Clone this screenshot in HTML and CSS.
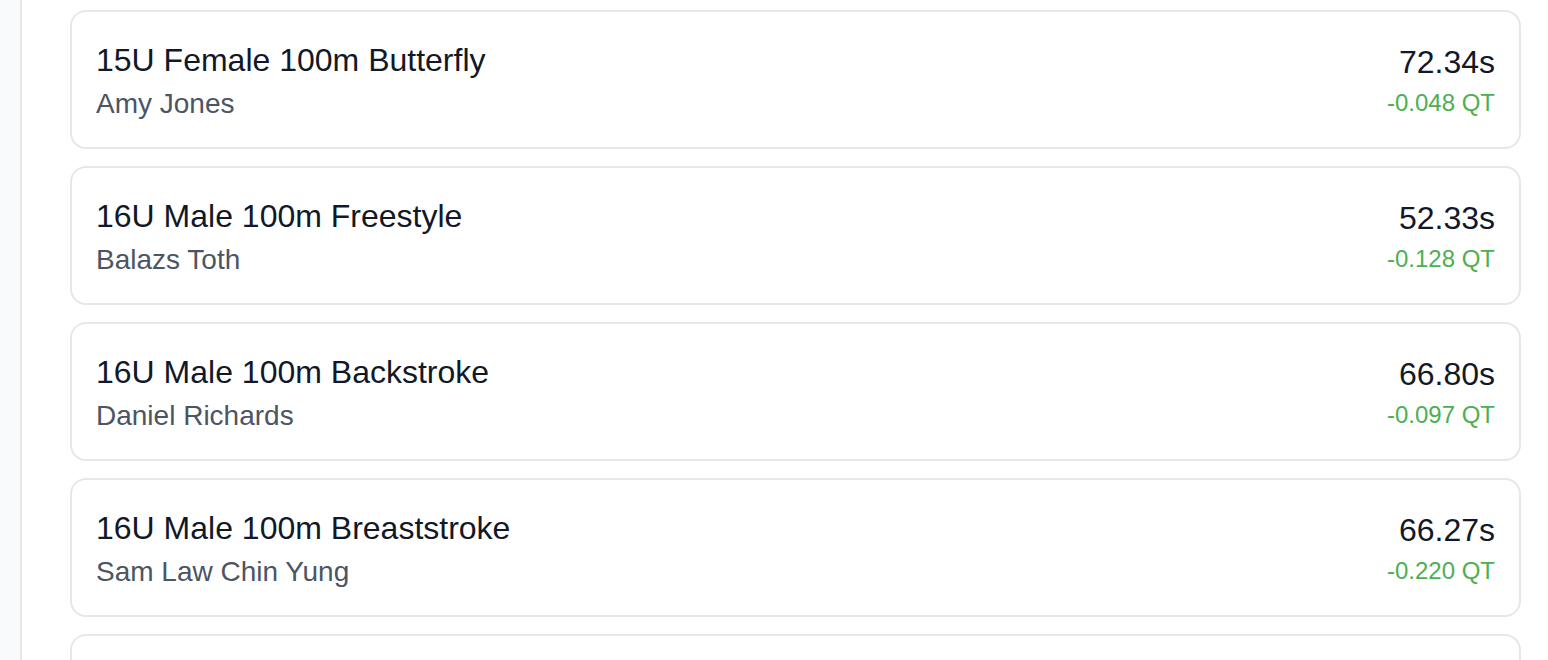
FILE: index.html
```html
<!DOCTYPE html>
<html lang="en">
<head>
<meta charset="utf-8">
<title>Qualifying Times</title>
<link rel="stylesheet" href="styles.css">
</head>
<body>
<div class="layout">
  <aside class="sidebar"></aside>
  <main class="main">
    <ul class="results">
      <li class="card">
        <div class="info">
          <div class="event">15U Female 100m Butterfly</div>
          <div class="swimmer">Amy Jones</div>
        </div>
        <div class="stats">
          <div class="time">72.34s</div>
          <div class="diff">-0.048 QT</div>
        </div>
      </li>
      <li class="card">
        <div class="info">
          <div class="event">16U Male 100m Freestyle</div>
          <div class="swimmer">Balazs Toth</div>
        </div>
        <div class="stats">
          <div class="time">52.33s</div>
          <div class="diff">-0.128 QT</div>
        </div>
      </li>
      <li class="card">
        <div class="info">
          <div class="event">16U Male 100m Backstroke</div>
          <div class="swimmer">Daniel Richards</div>
        </div>
        <div class="stats">
          <div class="time">66.80s</div>
          <div class="diff">-0.097 QT</div>
        </div>
      </li>
      <li class="card">
        <div class="info">
          <div class="event">16U Male 100m Breaststroke</div>
          <div class="swimmer">Sam Law Chin Yung</div>
        </div>
        <div class="stats">
          <div class="time">66.27s</div>
          <div class="diff">-0.220 QT</div>
        </div>
      </li>
      <li class="card">
        <div class="info">
          <div class="event">16U Male 200m Individual Medley</div>
          <div class="swimmer">Daniel Richards</div>
        </div>
        <div class="stats">
          <div class="time">142.10s</div>
          <div class="diff">-0.015 QT</div>
        </div>
      </li>
    </ul>
  </main>
</div>
</body>
</html>
```

FILE: styles.css
```css
* {
  box-sizing: border-box;
}

html, body {
  margin: 0;
  padding: 0;
  background: #ffffff;
  font-family: "Liberation Sans", Arial, Helvetica, sans-serif;
  color: #111827;
}

.layout {
  display: flex;
  min-height: 100vh;
}

.sidebar {
  width: 22px;
  flex: 0 0 22px;
  background: #f9fafb;
  border-right: 2px solid #e5e7eb;
}

.main {
  flex: 1;
  padding: 10px 27px 40px 48px;
}

.results {
  list-style: none;
  margin: 0;
  padding: 0;
  display: flex;
  flex-direction: column;
  gap: 17px;
}

.card {
  display: flex;
  justify-content: space-between;
  align-items: flex-start;
  border: 2px solid #e5e7eb;
  border-radius: 16px;
  padding: 24px 24px 23px;
  background: #ffffff;
}

.info {
  display: flex;
  flex-direction: column;
}

.event {
  font-size: 32px;
  line-height: 48px;
  color: #111827;
}

.swimmer {
  font-size: 28px;
  line-height: 40px;
  color: #4b5563;
}

.stats {
  display: flex;
  flex-direction: column;
  align-items: flex-end;
  padding-top: 2px;
}

.time {
  font-size: 32px;
  line-height: 48px;
  color: #111827;
}

.diff {
  font-size: 24px;
  line-height: 32px;
  margin-top: 1px;
  color: #4caf50;
}
```
